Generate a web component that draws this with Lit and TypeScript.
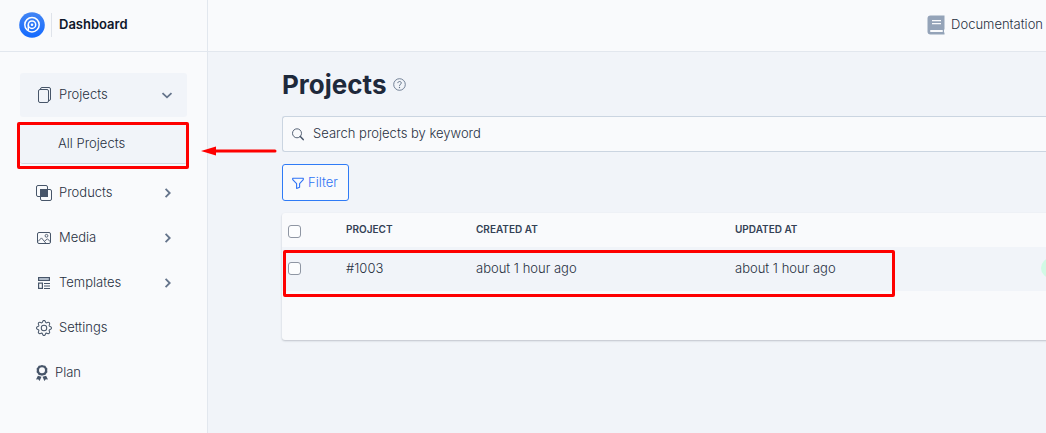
import { LitElement, html, css, svg, nothing } from "lit";
import { customElement } from "lit/decorators.js";

const chevronRight = svg`<path d="M4.6 1.9 8.7 6 4.6 10.1" />`;
const chevronDown = svg`<path d="M1.5 4.1 6 8.3 10.5 4.1" />`;

const icons = {
  projects: html`<svg class="icon" viewBox="0 0 16 16" fill="none" stroke="currentColor">
    <rect x="2.5" y="2.5" width="10" height="13" rx="1.5" />
    <path d="M4.5 2.2V2A1.5 1.5 0 0 1 6 .5h7A1.5 1.5 0 0 1 14.5 2v10a1.5 1.5 0 0 1-1.5 1.5h-.3" />
  </svg>`,
  products: html`<svg class="icon" viewBox="0 0 16 16" fill="none" stroke="currentColor">
    <rect x=".5" y=".5" width="11" height="11" rx="1.5" />
    <rect x="4.5" y="4.5" width="11" height="11" rx="1.5" />
    <rect x="4.5" y="4.5" width="7" height="7" fill="currentColor" />
  </svg>`,
  media: html`<svg class="icon" viewBox="0 0 16 16" fill="none" stroke="currentColor">
    <rect x="1.5" y="2.5" width="13" height="11" rx="1.5" />
    <circle cx="10.5" cy="5.8" r="1.4" stroke-width=".9" />
    <path d="M2 11.5 5.5 7.9 9.7 13M8.5 11.2 11.5 8.8 14.3 11.8" stroke-width=".9" />
  </svg>`,
  templates: html`<svg class="icon" viewBox="0 0 16 16" fill="none" stroke="currentColor">
    <rect x="2.6" y="2.6" width="10.8" height="2.8" stroke-width="1.2" fill="#cbd5e1" />
    <rect x="2.6" y="8.1" width="3.8" height="5.3" stroke-width="1.2" />
    <path d="M8 8.5h6M8 11h6M8 13.5h6" stroke-width="1.2" />
  </svg>`,
  settings: html`<svg class="icon" viewBox="0 0 16 16" fill="currentColor">
    <path d="M8 4.754a3.246 3.246 0 1 0 0 6.492 3.246 3.246 0 0 0 0-6.492zM5.754 8a2.246 2.246 0 1 1 4.492 0 2.246 2.246 0 0 1-4.492 0z" />
    <path d="M9.796 1.343c-.527-1.79-3.065-1.79-3.592 0l-.094.319a.873.873 0 0 1-1.255.52l-.292-.16c-1.64-.892-3.433.902-2.54 2.541l.159.292a.873.873 0 0 1-.52 1.255l-.319.094c-1.79.527-1.79 3.065 0 3.592l.319.094a.873.873 0 0 1 .52 1.255l-.16.292c-.892 1.64.901 3.434 2.541 2.54l.292-.159a.873.873 0 0 1 1.255.52l.094.319c.527 1.79 3.065 1.79 3.592 0l.094-.319a.873.873 0 0 1 1.255-.52l.292.16c1.64.893 3.434-.902 2.54-2.541l-.159-.292a.873.873 0 0 1 .52-1.255l.319-.094c1.79-.527 1.79-3.065 0-3.592l-.319-.094a.873.873 0 0 1-.52-1.255l.16-.292c.893-1.64-.902-3.433-2.541-2.54l-.292.159a.873.873 0 0 1-1.255-.52l-.094-.319zm-2.633.283c.246-.835 1.428-.835 1.674 0l.094.319a1.873 1.873 0 0 0 2.693 1.115l.291-.16c.764-.415 1.6.42 1.184 1.185l-.159.292a1.873 1.873 0 0 0 1.116 2.692l.318.094c.835.246.835 1.428 0 1.674l-.319.094a1.873 1.873 0 0 0-1.115 2.693l.16.291c.415.764-.42 1.6-1.185 1.184l-.291-.159a1.873 1.873 0 0 0-2.693 1.116l-.094.318c-.246.835-1.428.835-1.674 0l-.094-.319a1.873 1.873 0 0 0-2.692-1.115l-.292.16c-.764.415-1.6-.42-1.184-1.185l.159-.291A1.873 1.873 0 0 0 1.945 8.93l-.319-.094c-.835-.246-.835-1.428 0-1.674l.319-.094A1.873 1.873 0 0 0 3.06 4.377l-.16-.292c-.415-.764.42-1.6 1.185-1.184l.292.159a1.873 1.873 0 0 0 2.692-1.115l.094-.319z" />
  </svg>`,
  plan: html`<svg class="icon narrow" viewBox="0 0 12 16" fill="currentColor">
    <path fill-rule="evenodd" d="M6 0l1.6.5 1.7.3.9 1.4 1.2 1.2-.2 1.9.2 1.9-1.2 1.2-.9 1.5-1.7.3-1.6.6-1.6-.6-1.7-.3-.9-1.5L.6 7.2l.2-1.9-.2-1.9 1.2-1.2.9-1.4 1.7-.3zM6 2.3a3 3 0 1 0 0 6 3 3 0 0 0 0-6z" />
    <path d="M1.9 10.7 0 14.4l2.2-.1L3.6 16l1.9-4.3zM10.1 10.7 12 14.4l-2.2-.1L8.4 16l-1.9-4.3z" />
  </svg>`,
};

type NavItem = { label: string; icon: unknown; menu?: boolean; open?: boolean; children?: string[] };

const nav: NavItem[] = [
  { label: "Projects", icon: icons.projects, menu: true, open: true, children: ["All Projects"] },
  { label: "Products", icon: icons.products, menu: true },
  { label: "Media", icon: icons.media, menu: true },
  { label: "Templates", icon: icons.templates, menu: true },
  { label: "Settings", icon: icons.settings },
  { label: "Plan", icon: icons.plan },
];

const rows = [{ id: "#1003", created: "about 1 hour ago", updated: "about 1 hour ago" }];

@customElement("app-root")
export class AppRoot extends LitElement {
  static styles = css`
    :host {
      display: flex;
      flex-direction: column;
      min-height: 100vh;
      overflow: hidden;
      background: #f1f4f9;
      color: #27303f;
      font: 300 13px/20px Inter, sans-serif;
    }
    * { box-sizing: border-box; }
    a { color: inherit; text-decoration: none; }
    svg { display: block; flex: none; }
    .top {
      display: flex;
      height: 52px;
      background: #f9fafc;
      border-bottom: 1px solid #e2e7ee;
    }
    .brand {
      display: flex;
      align-items: center;
      width: 208px;
      padding: 0 0 2px 19px;
      border-right: 1px solid #e2e7ee;
      color: #0f172a;
      font-weight: 600;
    }
    .brand-name {
      margin-left: 6px;
      padding: 0 0 2px 7px;
      border-left: 1px solid #dfe3ea;
      line-height: 22px;
    }
    .docs {
      display: flex;
      align-items: center;
      gap: 6px;
      margin-left: auto;
      padding: 0 3px 2px 0;
    }
    .body { display: flex; flex: 1; }
    .side {
      flex: none;
      width: 208px;
      padding: 21px 20px;
      background: #f9fafc;
      border-right: 1px solid #e2e7ee;
    }
    .list {
      display: flex;
      flex-direction: column;
      gap: 1px;
      margin: 0;
      padding: 0;
      list-style: none;
    }
    .item {
      display: flex;
      align-items: center;
      gap: 7px;
      width: 100%;
      height: 44px;
      padding: 0 14px 0 16px;
      border: 0;
      border-radius: 3px;
      background: none;
      color: inherit;
      font: inherit;
      text-align: left;
    }
    .item span, .docs span { padding-bottom: 2px; }
    .item.open { background: #f1f4f9; }
    .icon { width: 16px; height: 16px; color: #475569; }
    .icon.narrow { width: 12px; }
    .chevron { margin-left: auto; color: #64748b; }
    .sub {
      position: relative;
      margin: 7px 0 6px;
    }
    .sub-link {
      display: block;
      padding: 9px 0 10px 38px;
      border-bottom: 1px solid #d3d9e2;
      border-radius: 3px;
      background: #f1f4f9;
    }
    .mark {
      position: absolute;
      border: 3px solid #fe0000;
      border-radius: 2px;
      pointer-events: none;
    }
    .sub .mark { inset: -2px -2px -5px -3px; }
    .arrow { position: absolute; left: 181px; top: 22px; }
    .main { flex: 1; min-width: 0; padding: 16px 0 40px 74px; }
    .heading { display: flex; align-items: center; gap: 7px; }
    h1 {
      margin: 0;
      color: #1e293b;
      font-size: 26px;
      font-weight: 700;
      line-height: 34px;
    }
    .help { padding: 0 0 2px; border: 0; background: none; color: #64748b; }
    .search {
      display: flex;
      align-items: center;
      gap: 9px;
      height: 36px;
      margin-top: 14px;
      padding-left: 9px;
      border: 1px solid #cbd5e1;
      border-right: 0;
      border-radius: 3px 0 0 3px;
      background: #f9fafc;
      color: #475569;
    }
    .search input {
      flex: 1;
      min-width: 0;
      padding: 0 0 2px;
      border: 0;
      outline: 0;
      background: none;
      color: #27303f;
      font: inherit;
    }
    .search input::placeholder { color: #27303f; opacity: 1; }
    .filter {
      display: flex;
      align-items: center;
      gap: 4px;
      height: 37px;
      margin-top: 12px;
      padding: 0 10px 0 9px;
      border: 1px solid #2f7bf6;
      border-radius: 3px;
      background: #f9fafc;
      color: #2f73f5;
      font: inherit;
    }
    .filter span { padding-bottom: 1px; }
    .card {
      position: relative;
      min-width: 960px;
      margin-top: 12px;
      padding-bottom: 49px;
      border-radius: 3px;
      background: #f9fafc;
      box-shadow: 0 1px 2px rgba(15, 23, 42, 0.22);
    }
    table { width: 100%; table-layout: fixed; border-collapse: collapse; }
    th, td { padding: 0 12px 2px; text-align: left; vertical-align: middle; }
    th {
      height: 34px;
      color: #334155;
      font-size: 10px;
      font-weight: 600;
      text-transform: uppercase;
    }
    td { height: 44px; background: #f1f4f9; }
    .c-check { width: 52px; }
    .c-project { width: 130px; }
    .c-created { width: 259px; }
    .c-updated { width: 306px; }
    th.check { padding: 2px 6px 0; }
    td.check { padding: 0 6px 1px; }
    input[type="checkbox"] {
      appearance: none;
      display: block;
      width: 13px;
      height: 13px;
      margin: 0;
      border: 1px solid #8f96a3;
      border-radius: 3px;
      background: #fcfdfe;
    }
    .badge {
      display: block;
      width: 72px;
      height: 20px;
      border-radius: 10px;
      background: #d1fae5;
    }
    .card .mark { top: 37px; left: 1px; width: 612px; height: 47px; }
  `;

  private renderItem(item: NavItem) {
    const inner = html`${item.icon}<span>${item.label}</span>${item.menu
        ? html`<svg class="chevron" width="12" height="12" viewBox="0 0 12 12" fill="none" stroke="currentColor" stroke-width="1.8">
            ${item.open ? chevronDown : chevronRight}
          </svg>`
        : nothing}`;
    return html`<li>
      ${item.menu
        ? html`<button class="item ${item.open ? "open" : ""}" aria-expanded=${item.open ? "true" : "false"}>${inner}</button>`
        : html`<a class="item" href="#">${inner}</a>`}
      ${item.children?.map(
        (label) => html`<div class="sub">
          <a class="sub-link" href="#">${label}</a>
          <span class="mark"></span>
          <svg class="arrow" width="76" height="10" viewBox="0 0 76 10" fill="#fe0000">
            <path d="M0 5 15 .5v9z" />
            <path d="M14 5h60" stroke="#fe0000" stroke-width="3" stroke-linecap="round" />
          </svg>
        </div>`
      )}
    </li>`;
  }

  render() {
    return html`
      <header class="top">
        <a class="brand" href="#">
          <svg width="26" height="26" viewBox="0 0 26 26" fill="none" stroke="#fff">
            <defs>
              <linearGradient id="blue" x1="0" y1="0" x2="0" y2="1">
                <stop offset="0" stop-color="#4285f4" />
                <stop offset="1" stop-color="#146aff" />
              </linearGradient>
            </defs>
            <circle cx="13" cy="13" r="12.8" fill="url(#blue)" stroke="none" />
            <circle cx="13" cy="12.7" r="7.2" stroke-width="1.5" />
            <circle cx="13" cy="12.7" r="3.7" stroke-width="1.5" />
            <path d="M9.3 12.7v5.5" stroke-width="1.5" />
            <circle cx="13" cy="12.7" r="1.3" fill="#fff" stroke="none" />
          </svg>
          <span class="brand-name">Dashboard</span>
        </a>
        <a class="docs" href="#">
          <svg width="18" height="20" viewBox="0 0 18 20">
            <path fill="#94a3b8" d="M3.5.5H17.5V19.5H3.5A3 3 0 0 1 .5 16.5V3.5A3 3 0 0 1 3.5.5z" />
            <path stroke="#f9fafc" stroke-width="1.2" d="M5 5.6h9M5 8.6h9" />
            <path stroke="#f9fafc" stroke-width="2" stroke-linecap="round" d="M4 16h11" />
            <path stroke="#f9fafc" stroke-width="1" d="M17.5 14.5v3" />
          </svg>
          <span>Documentation</span>
        </a>
      </header>
      <div class="body">
        <nav class="side">
          <ul class="list">${nav.map((item) => this.renderItem(item))}</ul>
        </nav>
        <main class="main">
          <div class="heading">
            <h1>Projects</h1>
            <button class="help" aria-label="Help">
              <svg width="13" height="13" viewBox="0 0 13 13" fill="none" stroke="currentColor">
                <circle cx="6.5" cy="6.5" r="5.8" stroke-width=".9" />
                <path d="M4.8 5.1C4.8 3 8.3 3 8.3 5 8.3 6.3 6.5 6.3 6.5 7.9" stroke-width="1" />
                <circle cx="6.5" cy="9.5" r=".65" fill="currentColor" stroke="none" />
              </svg>
            </button>
          </div>
          <label class="search">
            <svg width="12" height="13" viewBox="0 0 12 13" fill="none" stroke="currentColor">
              <circle cx="5" cy="5.3" r="4.5" stroke-width=".9" />
              <path d="M8.3 8.6 11.2 11.6" stroke-width="1.5" stroke-linecap="round" />
            </svg>
            <input type="search" aria-label="Search projects" placeholder="Search projects by keyword" />
          </label>
          <button class="filter">
            <svg width="12" height="12" viewBox="0 0 12 12" fill="none" stroke="currentColor" stroke-width="1.1" stroke-linejoin="round">
              <path d="M.7 1.2H11.3V2.6L7.6 6.6V10.2L4.6 11.4V6.6L.7 2.6z" />
            </svg>
            <span>Filter</span>
          </button>
          <section class="card">
            <table>
              <colgroup>
                <col class="c-check" /><col class="c-project" /><col class="c-created" /><col class="c-updated" /><col />
              </colgroup>
              <thead>
                <tr>
                  <th class="check"><input type="checkbox" aria-label="Select all projects" /></th>
                  <th>Project</th>
                  <th>Created at</th>
                  <th>Updated at</th>
                  <th></th>
                </tr>
              </thead>
              <tbody>
                ${rows.map(
                  (row) => html`<tr>
                    <td class="check"><input type="checkbox" aria-label="Select ${row.id}" /></td>
                    <td>${row.id}</td>
                    <td>${row.created}</td>
                    <td>${row.updated}</td>
                    <td><span class="badge"></span></td>
                  </tr>`
                )}
              </tbody>
            </table>
            <span class="mark"></span>
          </section>
        </main>
      </div>
    `;
  }
}
